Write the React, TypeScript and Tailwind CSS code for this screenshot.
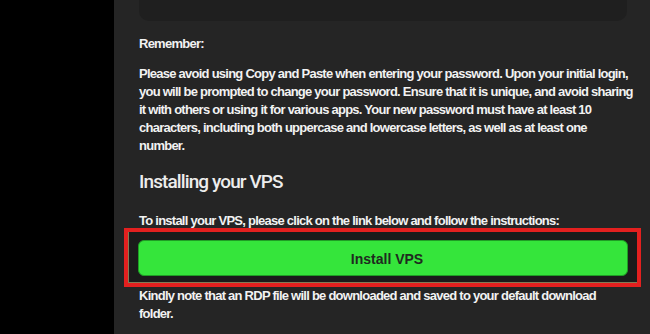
const paragraph = [
  "Please avoid using Copy and Paste when entering your password. Upon your initial login,",
  "you will be prompted to change your password. Ensure that it is unique, and avoid sharing",
  "it with others or using it for various apps. Your new password must have at least 10",
  "characters, including both uppercase and lowercase letters, as well as at least one",
  "number.",
];

const note = [
  "Kindly note that an RDP file will be downloaded and saved to your default download",
  "folder.",
];

export default function App() {
  return (
    <div className="flex h-[334px] w-[650px] overflow-hidden bg-black">
      <div className="w-[114px] shrink-0 bg-black" />
      <div className="min-w-0 flex-1 bg-[#252525] pl-[25px] pr-[23px] font-['Liberation_Sans',Arial,sans-serif] text-[13px] font-bold leading-[18px] tracking-[-0.75px] text-[#f2f2f2]">
        {/* Card (cut off at top) */}
        <div className="h-[21px] rounded-b-[10px] bg-[#1f1f1f]" />

        <p className="mt-[14px]">Remember:</p>

        <div className="mt-[12px]">
          {paragraph.map((line) => (
            <p key={line} className="whitespace-nowrap">
              {line}
            </p>
          ))}
        </div>

        <h2 className="mt-[15px] font-['Roboto',sans-serif] text-[19px] font-medium leading-[24px] tracking-[-0.9px] text-[#ededed]">
          Installing your VPS
        </h2>

        <p className="mt-[18px] whitespace-nowrap">
          To install your VPS, please click on the link below and follow the instructions:
        </p>

        {/* Highlighted button */}
        <div className="ml-[-15px] mr-[-14px] mt-[-2px] h-[59px] border-4 border-[#e3201f]">
          <div className="flex h-full border-b border-l border-[#837b57] bg-[#1b1b1b] pl-[9px] pr-[9px] pt-[8px]">
            <button className="h-[36px] w-full rounded-[6px] border border-[#1f9e25] bg-[#35e53b] pl-[8px] pt-[2px] text-[14px] font-bold tracking-normal text-[#1f2a1f]">
              Install VPS
            </button>
          </div>
        </div>

        <div>
          {note.map((line) => (
            <p key={line} className="whitespace-nowrap">
              {line}
            </p>
          ))}
        </div>
      </div>
    </div>
  );
}
